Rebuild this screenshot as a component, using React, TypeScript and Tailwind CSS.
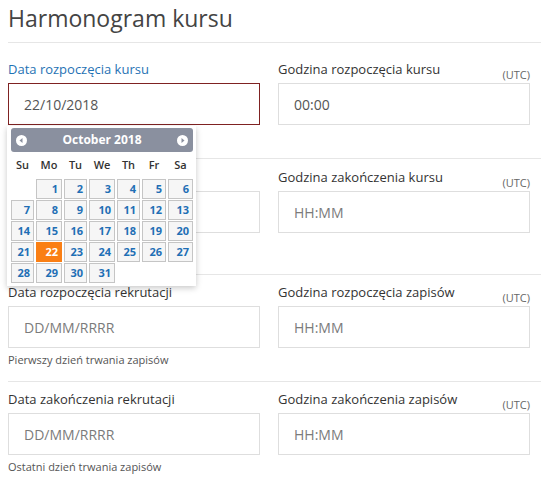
import React from "react";

const FONT = { fontFamily: '"Open Sans", "Noto Sans", sans-serif' };

type FieldProps = {
  label: string;
  value?: string;
  placeholder?: string;
  utc?: boolean;
  focused?: boolean;
  helper?: string;
  bottom?: string;
  children?: React.ReactNode;
};

function Field({ label, value, placeholder, utc, focused, helper, bottom = "h-[33px]", children }: FieldProps) {
  return (
    <div className="flex flex-col">
      <div className="h-[18px] flex items-end justify-between">
        <span className={`text-[13px] leading-[18px] ${focused ? "text-[#1f72b4]" : "text-[#333]"}`}>{label}</span>
        {utc && <span className="text-[11px] leading-[13px] text-[#666] mb-[-3px]">(UTC)</span>}
      </div>
      <div className="relative mt-[5px]">
        <div
          className={`h-[42px] border ${focused ? "border-[#7f2222]" : "border-[#dedede]"} bg-white flex items-center pl-[15px] text-[14px]`}
        >
          {value ? <span className="text-[#555]">{value}</span> : <span className="text-[#7b7b7b]">{placeholder}</span>}
        </div>
        {children}
      </div>
      <div className={bottom}>
        {helper && <div className="mt-[4px] text-[11px] leading-[15px] text-[#555]">{helper}</div>}
      </div>
    </div>
  );
}

function Arrow({ dir }: { dir: "l" | "r" }) {
  return (
    <svg width="11" height="11" viewBox="0 0 11 11">
      <circle cx="5.5" cy="5.5" r="5.5" fill="#fff" />
      {dir === "l" ? <path d="M3.5 5.5 L6.5 3 L6.5 8 Z" fill="#8a909f" /> : <path d="M7.5 5.5 L4.5 3 L4.5 8 Z" fill="#8a909f" />}
    </svg>
  );
}

function Calendar() {
  const days = ["Su", "Mo", "Tu", "We", "Th", "Fr", "Sa"];
  const cells: (number | null)[] = [null];
  for (let i = 1; i <= 31; i++) cells.push(i);
  return (
    <div className="absolute top-[43px] left-[-1px] w-[189px] bg-white pt-[2px] pl-[4px] pr-[3px] pb-[3px] shadow-[0_2px_6px_rgba(0,0,0,0.22)] z-10">
      <div className="h-[24px] rounded-[3px] bg-[#8a909f] flex items-center justify-between px-[5px]">
        <Arrow dir="l" />
        <span className="text-white font-bold text-[12px]">October 2018</span>
        <Arrow dir="r" />
      </div>
      <div className="grid grid-cols-[23px_26px_23px_26px_23px_24px_25px] gap-x-[2px]">
        {days.map((d) => (
          <div key={d} className="h-[27px] flex items-center justify-center text-[11px] font-semibold text-[#333]">
            {d}
          </div>
        ))}
      </div>
      <div className="grid grid-cols-[23px_26px_23px_26px_23px_24px_25px] gap-x-[2px] gap-y-[1px]">
        {cells.map((c, i) =>
          c === null ? (
            <div key={i} className="h-[20px]" />
          ) : (
            <div
              key={i}
              className={`h-[20px] border flex items-center justify-end pr-[3px] text-[11px] font-bold ${
                c === 22 ? "bg-[#fa7f14] border-[#fa7f14] text-white" : "bg-[#f6f6f6] border-[#c5c5c5] text-[#1f6fb5]"
              }`}
            >
              {c}
            </div>
          )
        )}
      </div>
    </div>
  );
}

export default function App() {
  return (
    <div className="w-[541px] h-[481px] bg-white overflow-hidden pl-[8px]" style={FONT}>
      <div className="h-[42px] pt-[3px] text-[23px] leading-[30px] text-[#444]">Harmonogram kursu</div>
      <div className="border-t border-[#e6e6e6] pt-[17px] pr-[11px] grid grid-cols-2 gap-x-[18px]">
        <Field label="Data rozpoczęcia kursu" value="22/10/2018" focused>
          <Calendar />
        </Field>
        <Field label="Godzina rozpoczęcia kursu" value="00:00" utc />
      </div>
      <div className="border-t border-[#e6e6e6] pt-[9px] pr-[11px] grid grid-cols-2 gap-x-[18px]">
        <Field label="Data zakończenia kursu" placeholder="DD/MM/RRRR" bottom="h-[41px]" />
        <Field label="Godzina zakończenia kursu" placeholder="HH:MM" utc bottom="h-[41px]" />
      </div>
      <div className="border-t border-[#e6e6e6] pt-[8px] pr-[11px] grid grid-cols-2 gap-x-[18px]">
        <Field label="Data rozpoczęcia rekrutacji" placeholder="DD/MM/RRRR" helper="Pierwszy dzień trwania zapisów" />
        <Field label="Godzina rozpoczęcia zapisów" placeholder="HH:MM" utc />
      </div>
      <div className="border-t border-[#e6e6e6] pt-[8px] pr-[11px] grid grid-cols-2 gap-x-[18px]">
        <Field label="Data zakończenia rekrutacji" placeholder="DD/MM/RRRR" helper="Ostatni dzień trwania zapisów" />
        <Field label="Godzina zakończenia zapisów" placeholder="HH:MM" utc />
      </div>
    </div>
  );
}
